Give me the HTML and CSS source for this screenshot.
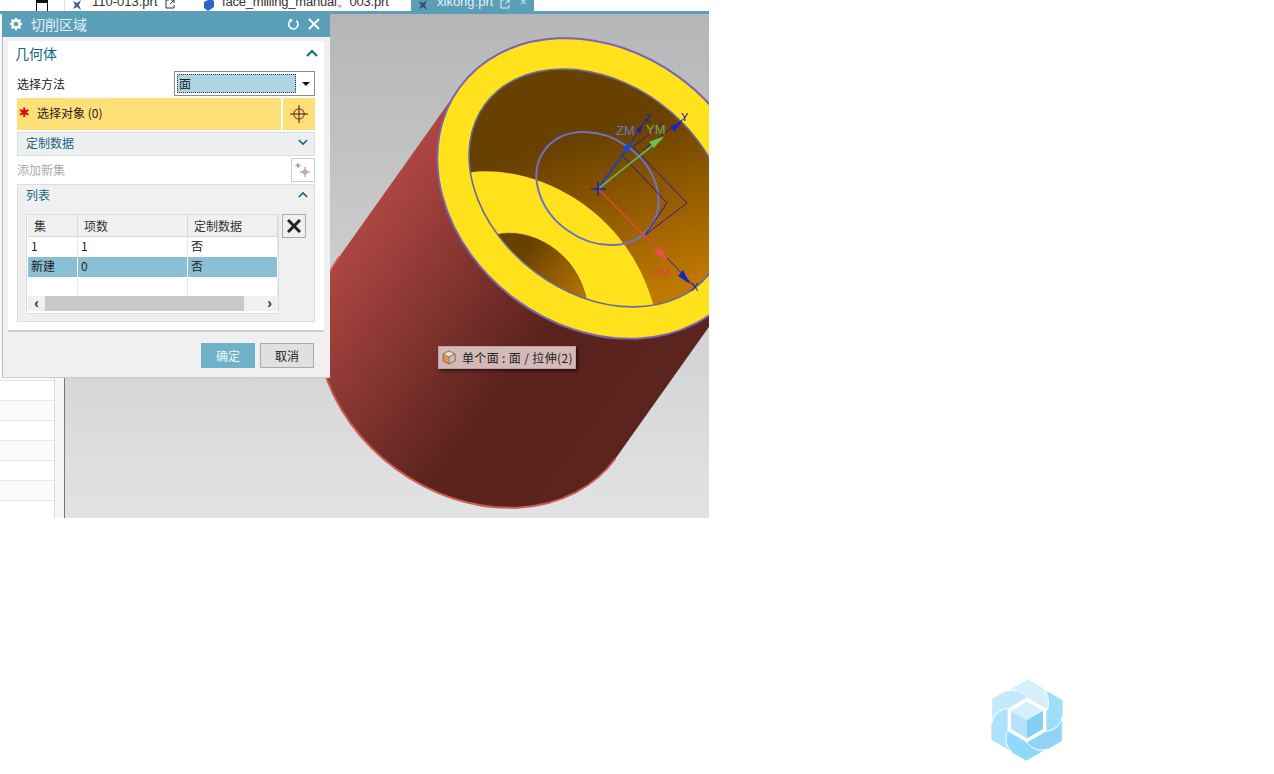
FILE: index.html
```html
<!DOCTYPE html>
<html lang="en">
<head>
    <meta charset="UTF-8">
    <title>切削区域</title>
    <link rel="stylesheet" href="styles.css">
</head>
<body>
    <div class="page">
        <div class="app">
            <div class="tabbar">
                <div class="tabbar-left"><span class="window-icon"></span></div>
                <div class="tab tab-first">
                    <svg class="tab-icon" viewBox="0 0 12 12"><path d="M2 2l4 2 4-3-2 5 2 5-4-3-4 2 2-4z" fill="#4a5f9a"/></svg>
                    <span>110-013.prt</span>
                    <svg class="tab-pop" viewBox="0 0 10 10"><path d="M4 1H1V9H9V6M6 1H9V4M9 1L5 5" fill="none" stroke="#333"/></svg>
                </div>
                <div class="tab tab-second">
                    <svg class="tab-icon" viewBox="0 0 12 12"><path d="M1 3l6-3 4 2v6l-6 4-4-3z" fill="#2d62c8"/></svg>
                    <span>face_milling_manual。003.prt</span>
                </div>
                <div class="tab tab-active">
                    <svg class="tab-icon" viewBox="0 0 12 12"><path d="M2 2l4 2 4-3-2 5 2 5-4-3-4 2 2-4z" fill="#33507f"/></svg>
                    <span>xikong.prt</span>
                    <svg class="tab-pop" viewBox="0 0 10 10"><path d="M4 1H1V9H9V6M6 1H9V4M9 1L5 5" fill="none" stroke="#e4f2f7"/></svg>
                    <span class="tab-close">×</span>
                </div>
            </div>

            <div class="workarea">
                <div class="side-list">
                    <div class="side-rows">
                        <div class="side-row"></div><div class="side-row"></div><div class="side-row"></div>
                        <div class="side-row"></div><div class="side-row"></div><div class="side-row"></div>
                        <div class="side-row"></div>
                    </div>
                </div>

                <svg class="viewport" viewBox="65 14 644 504" preserveAspectRatio="none">
                    <defs>
                        <linearGradient id="bgGrad" x1="0" y1="0" x2="0" y2="1">
                            <stop offset="0" stop-color="#b4b6b8"/>
                            <stop offset="1" stop-color="#e2e3e5"/>
                        </linearGradient>
                        <linearGradient id="bodyGrad" gradientUnits="userSpaceOnUse" x1="339" y1="256" x2="615" y2="458">
                            <stop offset="0" stop-color="#ad4642"/>
                            <stop offset="0.62" stop-color="#5a221d"/>
                            <stop offset="1" stop-color="#5c241f"/>
                        </linearGradient>
                        <linearGradient id="holeGrad" gradientUnits="userSpaceOnUse" x1="560" y1="150" x2="700" y2="250">
                            <stop offset="0" stop-color="#684000"/>
                            <stop offset="1" stop-color="#c07900"/>
                        </linearGradient>
                        <linearGradient id="pocketGrad" gradientUnits="userSpaceOnUse" x1="525" y1="250" x2="585" y2="295">
                            <stop offset="0" stop-color="#684000"/>
                            <stop offset="1" stop-color="#b87400"/>
                        </linearGradient>
                        <clipPath id="holeClip">
                            <ellipse cx="598" cy="188" rx="140.5" ry="105" transform="rotate(36.7 598 188)"/>
                        </clipPath>
                    </defs>

                    <rect x="65" y="14" width="644" height="504" fill="url(#bgGrad)"/>

                    <!-- cylinder body -->
                    <path d="M459.5 87.5L339.5 256.5A171 138 36.2 0 0 615.5 458.5L735.5 289.5Z" fill="url(#bodyGrad)"/>
                    <path d="M339.5 256.5A171 138 36.2 0 0 615.5 458.5" fill="none" stroke="#cc5a53" stroke-width="2"/>

                    <!-- end face -->
                    <ellipse cx="597.5" cy="188.5" rx="171" ry="138" transform="rotate(36.2 597.5 188.5)" fill="#ffe11c" stroke="#7b62b4" stroke-width="2"/>
                    <ellipse cx="598" cy="188" rx="140.5" ry="105" transform="rotate(36.7 598 188)" fill="url(#holeGrad)"/>
                    <g clip-path="url(#holeClip)">
                        <path d="M465 173C530 162 625 205 653 304L653 330L440 330Z" fill="#ffe11c"/>
                        <path d="M495 235C528 226 578 250 587 303L587 330L480 330Z" fill="url(#pocketGrad)" stroke="#4a3a20" stroke-width="0.6"/>
                    </g>
                    <ellipse cx="598" cy="188" rx="140.5" ry="105" transform="rotate(36.7 598 188)" fill="none" stroke="#6a6a9a" stroke-width="1.6"/>
                    <ellipse cx="597.5" cy="188.5" rx="65.3" ry="51.5" transform="rotate(35.4 597.5 188.5)" fill="none" stroke="#6f71c8" stroke-width="2"/>

                    <!-- csys -->
                    <g fill="none" stroke="#2a10b8" stroke-width="1">
                        <path d="M623 156L667 203L645 235"/>
                        <path d="M633 147L687 203L645 235"/>
                        <path d="M633 147L663 123"/>
                        <path d="M643 150L685 118"/>
                    </g>
                    <path d="M598 189L628 147" stroke="#1a3fc0" stroke-width="2"/>
                    <path d="M628 147L647 118" stroke="#1a22b0" stroke-width="1"/>
                    <path d="M598 189L662 138" stroke="#62b84a" stroke-width="1.6"/>
                    <path d="M598 189L667 258" stroke="#e2483f" stroke-width="1.4"/>
                    <path d="M667 258L695 287" stroke="#1a22b0" stroke-width="1"/>
                    <path d="M591 189H606M598 182V196" stroke="#1a22c8" stroke-width="1.6"/>
                    <path d="M634 140L627 154L622 148Z" fill="#1a4cc8"/>
                    <path d="M643 124L640 134L636 130Z" fill="#1a22a0"/>
                    <path d="M664 136L654 148L649 142Z" fill="#6cc050"/>
                    <path d="M682 122L674 132L670 126Z" fill="#1a22c8"/>
                    <path d="M668 261L654 253L660 246Z" fill="#e8504a"/>
                    <path d="M690 284L678 276L683 270Z" fill="#1a22c8"/>
                    <text class="axis-label axis-z" x="616" y="135">ZM</text>
                    <text class="axis-label axis-y" x="646" y="134">YM</text>
                    <text class="axis-label axis-x" x="651" y="277">XM</text>
                    <text class="axis-tip" x="645" y="122">Z</text>
                    <text class="axis-tip" x="681" y="121">Y</text>
                    <text class="axis-tip" x="691" y="291">X</text>
                </svg>
            </div>

            <!-- dialog -->
            <div class="dialog">
                <div class="dialog-title">
                    <svg class="gear" viewBox="0 0 16 16">
                        <circle cx="8" cy="8" r="4.2" fill="none" stroke="#fff" stroke-width="3"/>
                        <path d="M8 1v2.5M8 12.5V15M1 8h2.5M12.5 8H15M3 3l1.8 1.8M11.2 11.2L13 13M3 13l1.8-1.8M11.2 4.8L13 3" stroke="#fff" stroke-width="2.2"/>
                    </svg>
                    <span class="dialog-name">切削区域</span>
                    <svg class="reset" viewBox="0 0 14 14"><path d="M4 2.6A5 5 0 1 0 10 2.8" fill="none" stroke="#fff" stroke-width="1.7"/><path d="M1.8 1.2L6 1.4L4.4 5Z" fill="#fff"/></svg>
                    <svg class="close" viewBox="0 0 12 12"><path d="M1 1L11 11M11 1L1 11" stroke="#fff" stroke-width="2"/></svg>
                </div>

                <div class="dialog-panel">
                    <div class="group-head">
                        <span>几何体</span>
                        <svg class="chev" viewBox="0 0 12 8"><path d="M1 7L6 2L11 7" fill="none" stroke="#17657f" stroke-width="2"/></svg>
                    </div>

                    <div class="field-row">
                        <span>选择方法</span>
                        <div class="combo">
                            <span class="combo-value">面</span>
                            <span class="combo-arrow"></span>
                        </div>
                    </div>

                    <div class="select-row">
                        <div class="select-main">
                            <span class="req">✱</span>
                            <span>选择对象 (0)</span>
                        </div>
                        <div class="select-btn">
                            <svg viewBox="0 0 20 20"><circle cx="10" cy="10" r="5.2" fill="none" stroke="#c8330f" stroke-width="1.2"/><path d="M10 1V19M1 10H19" stroke="#222" stroke-width="1"/></svg>
                        </div>
                    </div>

                    <div class="sub-head sub-closed">
                        <span>定制数据</span>
                        <svg class="chev" viewBox="0 0 12 8"><path d="M1 1L6 6L11 1" fill="none" stroke="#17657f" stroke-width="2"/></svg>
                    </div>

                    <div class="add-row">
                        <span>添加新集</span>
                        <div class="add-btn">
                            <svg viewBox="0 0 16 16"><path d="M3 1V6M.5 3.500H5.500" stroke="#9a9a9a" stroke-width="1.3"/><path d="M10 5V15M5 10H15" stroke="#9a8a8a" stroke-width="1"/><circle cx="10" cy="10" r="2.600" fill="#c9a8a0"/></svg>
                        </div>
                    </div>

                    <div class="list-box">
                        <div class="sub-head">
                            <span>列表</span>
                            <svg class="chev" viewBox="0 0 12 8"><path d="M1 7L6 2L11 7" fill="none" stroke="#17657f" stroke-width="2"/></svg>
                        </div>
                        <div class="list-body">
                            <div class="table-wrap">
                                <div class="t-row t-head"><span>集</span><span>项数</span><span>定制数据</span></div>
                                <div class="t-row"><span>1</span><span>1</span><span>否</span></div>
                                <div class="t-row t-selected"><span>新建</span><span>0</span><span>否</span></div>
                                <div class="t-row t-empty"><span></span><span></span><span></span></div>
                                <div class="scrollbar">
                                    <span class="scroll-arrow">‹</span>
                                    <span class="scroll-track"><span class="scroll-thumb"></span></span>
                                    <span class="scroll-arrow">›</span>
                                </div>
                            </div>
                            <div class="del-btn">
                                <svg viewBox="0 0 14 14"><path d="M1 1L13 13M13 1L1 13" stroke="#222" stroke-width="3"/></svg>
                            </div>
                        </div>
                    </div>
                </div>

                <div class="dialog-foot">
                    <button class="btn btn-ok">确定</button>
                    <button class="btn">取消</button>
                </div>
            </div>

            <!-- tooltip -->
            <div class="tip">
                <svg class="tip-icon" viewBox="0 0 14 15"><path d="M7 1L13 4V11L7 14L1 11V4Z" fill="#e8923a" stroke="#8a6a50" stroke-width="1"/><path d="M1 4L7 7L13 4L7 1Z" fill="#e6e0da" stroke="#8a6a50" stroke-width="0.8"/><path d="M7 7V14L13 11V4Z" fill="#c9c2bb" stroke="#8a6a50" stroke-width="0.8"/></svg>
                <span>单个面 : 面 / 拉伸(2)</span>
            </div>
        </div>

        <svg class="logo" viewBox="-36 -41 72 82">
            <g stroke="#fff" stroke-width="0.8">
                <path d="M15-32L36-20V-4Q34 8 19 13V-9Q25-24 15-32Z" fill="#a0ddfb"/>
                <path d="M15-32L36-20V-4Q34 8 19 13V-9Q25-24 15-32Z" fill="#8fd4f7" transform="rotate(60)"/>
                <path d="M15-32L36-20V-4Q34 8 19 13V-9Q25-24 15-32Z" fill="#8fd9fb" transform="rotate(120)"/>
                <path d="M15-32L36-20V-4Q34 8 19 13V-9Q25-24 15-32Z" fill="#aee1fb" transform="rotate(180)"/>
                <path d="M15-32L36-20V-4Q34 8 19 13V-9Q25-24 15-32Z" fill="#c3e9fc" transform="rotate(240)"/>
                <path d="M15-32L36-20V-4Q34 8 19 13V-9Q25-24 15-32Z" fill="#d6effd" transform="rotate(300)"/>
            </g>
            <path d="M0-18.500L16-9L0 0L-16-9Z" fill="#d6effd"/>
            <path d="M-16-9L0 0V18.500L-16 9Z" fill="#b6e0fb"/>
            <path d="M16-9L0 0V18.500L16 9Z" fill="#84cff6"/>
        </svg>
    </div>
</body>
</html>
```

FILE: styles.css
```css
* {
    margin: 0;
    padding: 0;
    box-sizing: border-box;
}

body {
    background: #fff;
    font-family: 'Noto Sans CJK SC', 'Liberation Sans', sans-serif;
    font-size: 12px;
    color: #222;
    overflow: hidden;
}

.page {
    display: flex;
    align-items: flex-start;
    width: 1274px;
    height: 774px;
}

.app {
    position: relative;
    width: 709px;
    height: 518px;
    overflow: hidden;
    flex-shrink: 0;
}

/* tab strip, cut off at the top of the shot */
.tabbar {
    display: flex;
    height: 14px;
    overflow: hidden;
    background: #fff;
    border-bottom: 3px solid #5a9fb7;
    font-family: 'Liberation Sans', sans-serif;
    font-size: 13px;
}

.tabbar-left {
    width: 65px;
    flex-shrink: 0;
    margin-bottom: -3px;
    background: #fff;
    padding-left: 36px;
    border-right: 1px solid #ddd;
}

.window-icon {
    display: block;
    width: 12px;
    height: 12px;
    border: 1px solid #111;
    border-top-width: 3px;
}

.tab {
    display: flex;
    align-items: flex-end;
    height: 11px;
    line-height: 15px;
    color: #333;
    white-space: nowrap;
}

.tab span {
    display: block;
    height: 15px;
    margin-bottom: 2px;
    flex-shrink: 0;
}

.tab-first {
    width: 130px;
    padding-left: 6px;
}

.tab-second {
    width: 216px;
    padding-left: 8px;
    letter-spacing: -0.2px;
}

.tab-active {
    width: 123px;
    padding-left: 6px;
    background: #5a9fb7;
    color: #e4f2f7;
}

.tab-icon {
    width: 12px;
    height: 12px;
    flex-shrink: 0;
}

.tab-first .tab-icon {
    margin-right: 9px;
}

.tab-second .tab-icon {
    margin-right: 7px;
}

.tab-active .tab-icon {
    margin-right: 8px;
}

.tab-pop {
    width: 10px;
    height: 10px;
    margin: 0 0 2px 7px;
    flex-shrink: 0;
}

.tab .tab-close {
    margin-left: 9px;
    color: #cfe5ec;
}

.workarea {
    display: flex;
    height: 504px;
}

.side-list {
    width: 65px;
    flex-shrink: 0;
    background: #f6f6f6;
    border-right: 1px solid #777;
    display: flex;
    flex-direction: column;
    justify-content: flex-end;
}

.side-rows {
    width: 55px;
    padding-bottom: 17px;
    border-right: 1px solid #ddd;
    background: #fff;
}

.side-row {
    height: 20px;
    border-bottom: 1px solid #e6e6e6;
}

.side-row:nth-child(odd) {
    background: #fafafa;
}

.viewport {
    display: block;
    width: 644px;
    height: 504px;
}

.axis-label {
    font-family: 'Liberation Sans', sans-serif;
    font-size: 13px;
}

.axis-z {
    fill: #6a74c8;
}

.axis-y {
    fill: #6fae50;
}

.axis-x {
    fill: #d8453f;
}

.axis-tip {
    font-family: 'Liberation Sans', sans-serif;
    font-size: 11px;
    fill: #1a22a0;
}

/* dialog */
.dialog {
    position: absolute;
    left: 2px;
    top: 11px;
    width: 328px;
    height: 367px;
    background: #f0f0f0;
    display: flex;
    flex-direction: column;
    border-left: 1px solid #bbb;
    border-bottom: 1px solid #ccc;
}

.dialog-title {
    display: flex;
    align-items: center;
    height: 26px;
    margin-left: -1px;
    padding: 0 10px 0 7px;
    background: #5a9fb7;
    color: #e6f1f5;
    font-size: 14px;
}

.gear {
    width: 14px;
    height: 14px;
    margin-right: 8px;
}

.dialog-name {
    flex: 1;
}

.reset {
    width: 13px;
    height: 13px;
    margin-right: 8px;
}

.close {
    width: 12px;
    height: 12px;
}

.dialog-panel {
    height: 291px;
    margin: 4px 6px 0 5px;
    padding: 0 9px;
    background: #fff;
    border-bottom: 2px solid #d0d0d0;
}

.group-head {
    display: flex;
    align-items: center;
    justify-content: space-between;
    height: 24px;
    margin: 0 -3px 6px -2px;
    font-size: 14px;
    color: #17657f;
}

.chev {
    width: 10px;
    height: 7px;
}

.group-head .chev {
    width: 12px;
    height: 8px;
}

.field-row {
    display: flex;
    align-items: flex-start;
    justify-content: space-between;
    height: 27px;
}

.field-row > span {
    margin-top: 4px;
}

.combo {
    display: flex;
    align-items: center;
    width: 141px;
    height: 25px;
    padding: 2px;
    border: 1px solid #8a8a8a;
    background: #fff;
}

.combo-value {
    width: 119px;
    height: 19px;
    line-height: 17px;
    padding-left: 1px;
    background: #add5e2;
    border: 1px dotted #333;
}

.combo-arrow {
    width: 0;
    height: 0;
    margin-left: 6px;
    border-left: 4px solid transparent;
    border-right: 4px solid transparent;
    border-top: 4px solid #111;
}

.select-row {
    display: flex;
    gap: 2px;
    height: 32px;
}

.select-main {
    display: flex;
    align-items: center;
    gap: 6px;
    width: 264px;
    padding: 0 0 3px 2px;
    background: #ffdf78;
}

.req {
    color: #c8101c;
    font-size: 13px;
    font-family: 'DejaVu Sans', sans-serif;
    width: 12px;
}

.select-btn {
    display: flex;
    align-items: center;
    justify-content: center;
    width: 32px;
    background: #ffdf78;
}

.select-btn svg {
    width: 20px;
    height: 20px;
}

.sub-head {
    display: flex;
    align-items: center;
    justify-content: space-between;
    height: 22px;
    margin-bottom: 1px;
    padding: 0 6px 3px 8px;
    color: #17657f;
}

.sub-closed {
    height: 24px;
    margin: 2px 0 0;
    background: #eeeff0;
    border: 1px solid #ddd;
}

.add-row {
    display: flex;
    align-items: center;
    justify-content: space-between;
    height: 24px;
    margin-top: 2px;
    color: #aaa;
}

.add-row > span {
    margin-top: -2px;
}

.add-btn {
    display: flex;
    align-items: center;
    justify-content: center;
    width: 24px;
    height: 24px;
    border: 1px solid #ccc;
}

.add-btn svg {
    width: 16px;
    height: 16px;
}

.list-box {
    height: 138px;
    margin-top: 2px;
    background: #f0f0f0;
    border: 1px solid #ddd;
}

.list-body {
    display: flex;
    align-items: flex-start;
    gap: 3px;
    padding: 6px 0 0 8px;
}

.table-wrap {
    width: 253px;
    height: 100px;
    padding: 0 0 1px 1px;
    background: #fff;
    border: 1px solid #ddd;
}

.t-row {
    display: grid;
    grid-template-columns: 50px 110px 90px;
    height: 20px;
    line-height: 18px;
}

.t-row span {
    padding-left: 3px;
    border-right: 1px solid #e6e6e6;
}

.t-head {
    height: 22px;
    line-height: 22px;
    background: #f0f0f0;
    border-bottom: 1px solid #d8d8d8;
    color: #333;
}

.t-head span {
    padding-left: 6px;
    border-right-color: #d8d8d8;
}

.t-selected {
    background: #8ac0d3;
}

.t-selected span {
    border-right-color: #fff;
}

.t-empty {
    height: 19px;
}

.scrollbar {
    display: flex;
    align-items: center;
    height: 15px;
    background: #f0f0f0;
}

.scroll-arrow {
    width: 17px;
    text-align: center;
    font-size: 14px;
    font-weight: bold;
    line-height: 13px;
    color: #333;
    font-family: 'Liberation Sans', sans-serif;
}

.scroll-track {
    flex: 1;
    height: 15px;
}

.scroll-thumb {
    display: block;
    width: 199px;
    height: 15px;
    background: #c8c8c8;
}

.del-btn {
    display: flex;
    align-items: center;
    justify-content: center;
    width: 24px;
    height: 24px;
    background: #f0f0f0;
    border: 1px solid #aaa;
}

.del-btn svg {
    width: 14px;
    height: 14px;
}

.dialog-foot {
    display: flex;
    justify-content: flex-end;
    gap: 5px;
    padding: 11px 16px 0 0;
}

.btn {
    width: 54px;
    height: 25px;
    border: 1px solid #aaa;
    background: #e0e0e0;
    color: #222;
    font-family: inherit;
    font-size: 12px;
}

.btn-ok {
    border: 0;
    background: #70b2ca;
    color: #eef6f9;
}

/* hover label on the model */
.tip {
    position: absolute;
    left: 438px;
    top: 346px;
    display: flex;
    align-items: center;
    gap: 6px;
    width: 138px;
    height: 23px;
    padding-left: 3px;
    background: #d5b9b9;
    border: 1px solid #b9a3a3;
    box-shadow: 2px 2px 3px rgba(0, 0, 0, 0.55);
    color: #222;
    letter-spacing: 0.35px;
    white-space: nowrap;
}

.tip-icon {
    width: 14px;
    height: 15px;
    flex-shrink: 0;
}

/* watermark */
.logo {
    width: 72px;
    height: 82px;
    margin: 679px 0 0 282px;
    flex-shrink: 0;
}
```
